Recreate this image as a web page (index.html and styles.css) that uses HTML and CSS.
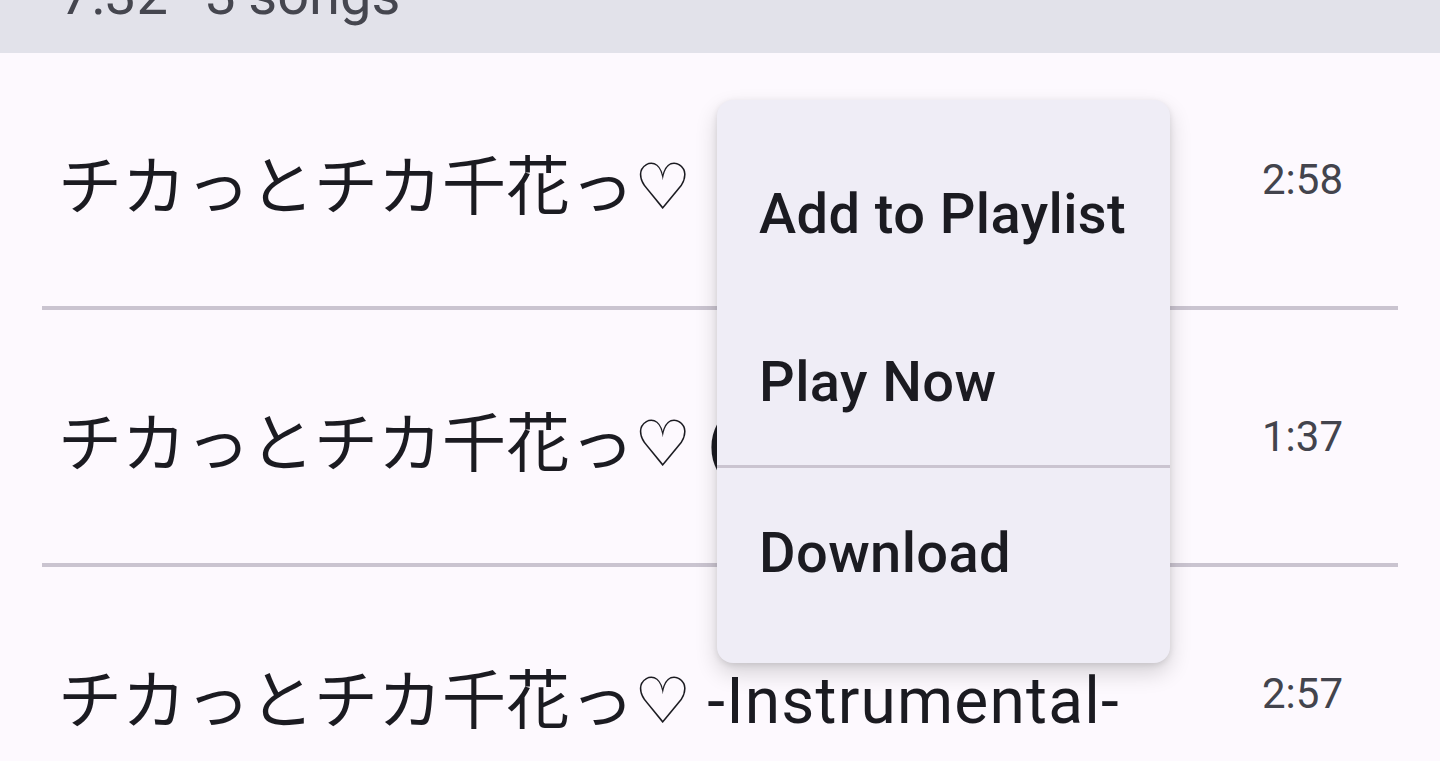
FILE: index.html
```html
<!DOCTYPE html>
<html lang="ja">
<head>
<meta charset="utf-8">
<title>Album</title>
<link rel="stylesheet" href="styles.css">
</head>
<body>
<div class="screen">
  <header class="album-header">
    <div class="album-meta">7:32 · 3 songs</div>
  </header>
  <ul class="track-list">
    <li class="track">
      <span class="track-title">チカっとチカ千花っ♡</span>
      <span class="track-duration">2:58</span>
    </li>
    <li class="track">
      <span class="track-title">チカっとチカ千花っ♡ <span class="latin">(TV Size)</span></span>
      <span class="track-duration">1:37</span>
    </li>
    <li class="track">
      <span class="track-title">チカっとチカ千花っ♡ <span class="latin">-Instrumental-</span></span>
      <span class="track-duration">2:57</span>
    </li>
  </ul>
  <div class="menu" role="menu">
    <div class="menu-item" role="menuitem">Add to Playlist</div>
    <div class="menu-item" role="menuitem">Play Now</div>
    <div class="menu-divider"></div>
    <div class="menu-item" role="menuitem">Download</div>
  </div>
</div>
</body>
</html>
```
FILE: styles.css
```css
* { box-sizing: border-box; }
html, body {
  margin: 0;
  padding: 0;
  background: #fdf9fe;
  overflow: hidden;
}
.screen {
  position: relative;
  width: 1440px;
  height: 761px;
  overflow: hidden;
  font-family: Roboto, "DejaVu Sans", "Noto Sans CJK JP", sans-serif;
}
.album-header {
  height: 53px;
  background: #e2e2ea;
  overflow: hidden;
  padding-left: 60px;
}
.album-meta {
  margin-top: -33px;
  font-size: 56px;
  line-height: 56px;
  word-spacing: -2.5px;
  color: #45464f;
  white-space: nowrap;
}
.track-list {
  list-style: none;
  margin: 0 42px;
  padding: 0;
}
.track {
  height: 257px;
  display: flex;
  align-items: center;
  padding: 6px 56px 0 16px;
  border-bottom: 4px solid #cac4d0;
}
.track-title {
  flex: 1;
  padding-top: 10px;
  font-size: 64px;
  line-height: 80px;
  color: #1b1b21;
  white-space: nowrap;
  overflow: hidden;
}
.latin {
  letter-spacing: 1.2px;
}
.track-duration {
  font-size: 42px;
  font-weight: 400;
  color: #43444d;
  margin-top: -6px;
  margin-right: -1px;
}
.menu {
  position: absolute;
  left: 717px;
  top: 100px;
  width: 453px;
  padding: 30px 0 26px;
  background: #efedf6;
  border-radius: 16px;
  box-shadow: 0 10px 22px rgba(0, 0, 0, 0.16), 0 2px 6px rgba(0, 0, 0, 0.10);
}
.menu-item {
  height: 168px;
  display: flex;
  align-items: center;
  padding-left: 42px;
  font-size: 56px;
  font-weight: 500;
  letter-spacing: 0.4px;
  color: #1b1b21;
}
.menu-divider {
  height: 3px;
  margin-top: -1px;
  margin-bottom: 1px;
  background: #cac4d0;
}
```
